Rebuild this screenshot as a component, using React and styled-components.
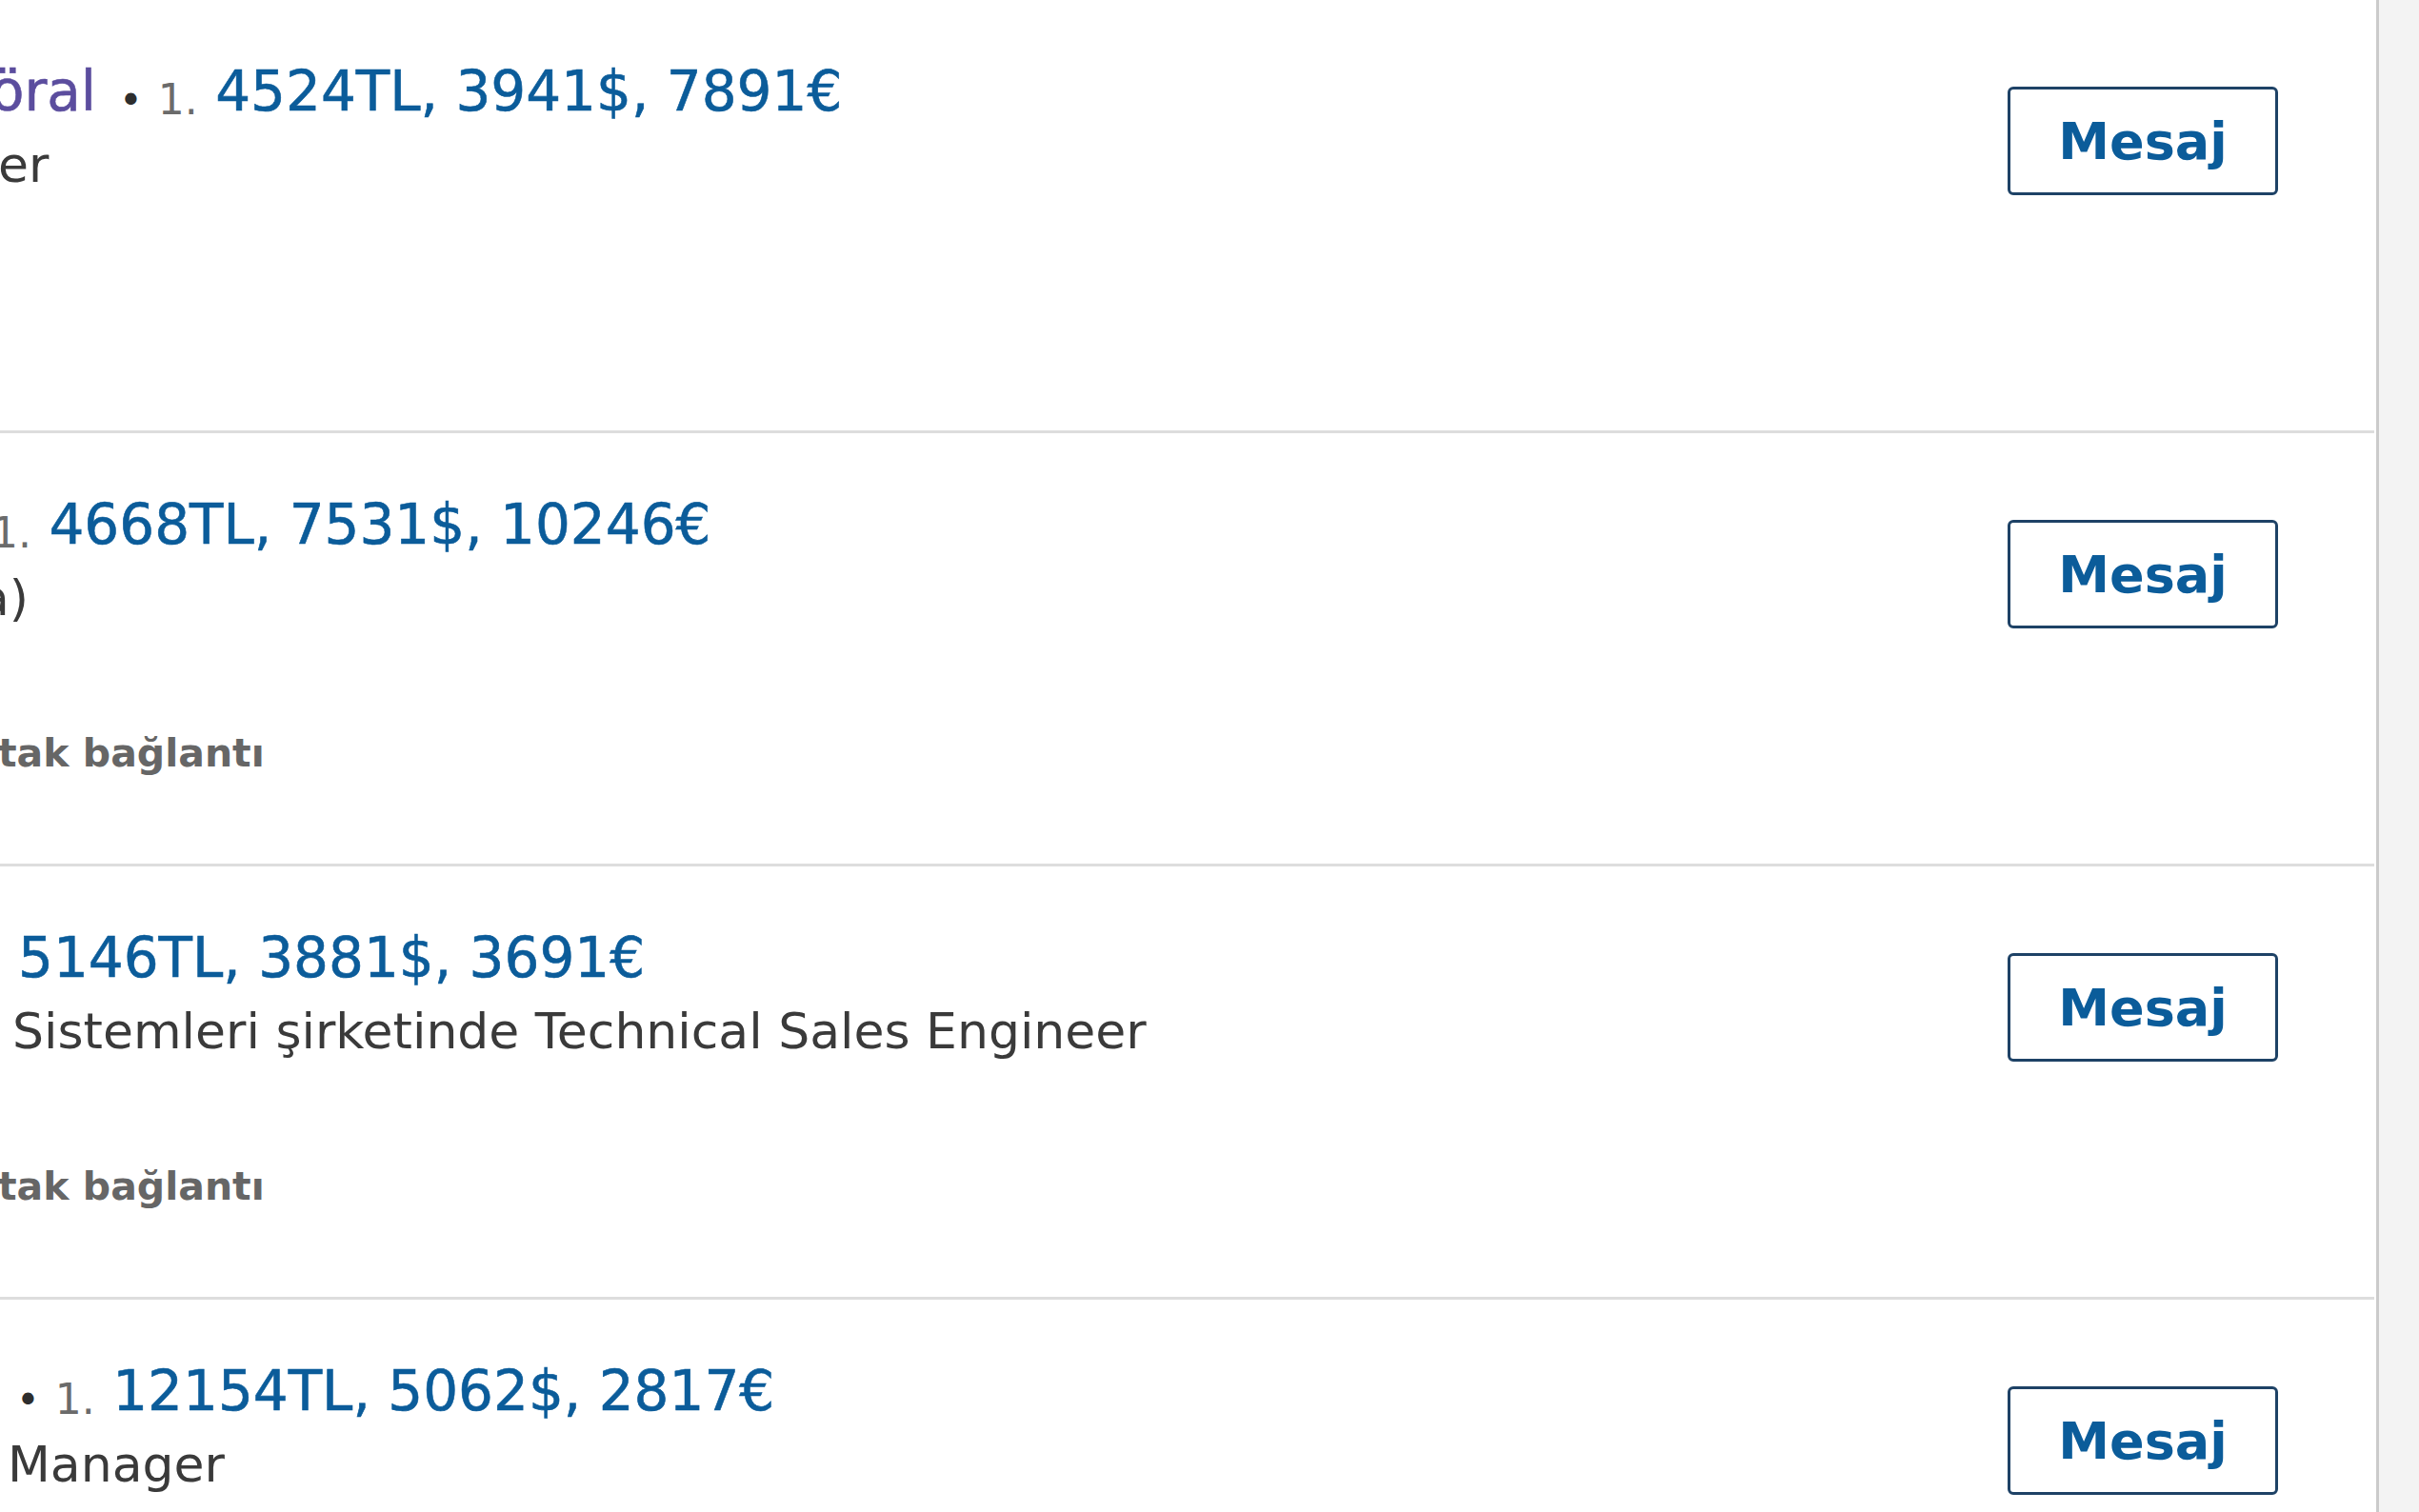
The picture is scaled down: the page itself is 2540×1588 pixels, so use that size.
import React from "react";
import styled, { createGlobalStyle } from "styled-components";

const GlobalStyle = createGlobalStyle`
	html, body {
		margin: 0;
		padding: 0;
		background: #f3f3f3;
	}
	body {
		font-family: "DejaVu Sans", "Noto Sans", sans-serif;
	}
`;

const connections = [
	{ lead: "öral", leadShift: -10, degree: true, price: "4524TL, 3941$, 7891€", title: "er", titleShift: -2 },
	{ lead: null, degreeOnly: "1.", degreeShift: -9, price: "4668TL, 7531$, 10246€", title: "a)", titleShift: -22, mutual: "tak bağlantı", mutualShift: -2 },
	{ lead: null, priceShift: 19, price: "5146TL, 3881$, 3691€", title: "Sistemleri şirketinde Technical Sales Engineer", titleShift: 13, mutual: "tak bağlantı", mutualShift: -2 },
	{ lead: null, degree: true, degreeShift: -7, price: "12154TL, 5062$, 2817€", title: "Manager", titleShift: 8 },
];

function ConnectionRow({ item }) {
	return (
		<Row>
			<Info>
				<NameLine>
					{item.lead && <Name shift={item.leadShift}>{item.lead}</Name>}
					{item.degree && (
						<Degree shift={item.degreeShift}>
							{" "}
							<Bullet>•</Bullet> 1.
						</Degree>
					)}
					{item.degreeOnly && <Degree shift={item.degreeShift}>{item.degreeOnly}</Degree>}
					<Price shift={item.priceShift}>
						{item.lead || item.degree || item.degreeOnly ? " " : ""}
						{item.price}
					</Price>
				</NameLine>
				<Title shift={item.titleShift}>{item.title}</Title>
				{item.mutual && <Mutual shift={item.mutualShift}>{item.mutual}</Mutual>}
			</Info>
			<MessageBtn>Mesaj</MessageBtn>
		</Row>
	);
}

export default function App() {
	return (
		<>
			<GlobalStyle />
			<Page>
				<Panel>
					{connections.map((c, i) => (
						<ConnectionRow key={i} item={c} />
					))}
				</Panel>
			</Page>
		</>
	);
}

const Page = styled.div`
	display: flex;
	width: 2540px;
	height: 1588px;
	overflow: hidden;
`;

const Panel = styled.div`
	width: 2498px;
	height: 100%;
	box-sizing: border-box;
	background: #ffffff;
	border-right: 3px solid #cbcbcb;
	overflow: hidden;
`;

const Row = styled.div`
	display: flex;
	justify-content: space-between;
	align-items: flex-start;
	height: 455px;
	box-sizing: border-box;
	border-bottom: 3px solid #dddddd;
	margin-right: 2px;
`;

const Info = styled.div`
	flex: 1;
	min-width: 0;
	padding-top: 60px;
	overflow: hidden;
`;

const NameLine = styled.div`
	font-size: 58px;
	line-height: 72px;
	white-space: nowrap;
`;

const Name = styled.span`
	color: #5b4d9e;
	-webkit-text-stroke: 0.6px currentColor;
	margin-left: ${(p) => p.shift || 0}px;
`;

const Degree = styled.span`
	display: inline-block;
	font-size: 44px;
	line-height: 1;
	color: #6b6b6b;
	margin-left: ${(p) => p.shift || 0}px;
	vertical-align: -4px;
`;

const Bullet = styled.span`
	color: #2e2e2e;
	font-size: 42px;
	margin: 0 2px 0 24px;
`;

const Price = styled.span`
	color: #0b5c9a;
	-webkit-text-stroke: 0.6px currentColor;
	margin-left: ${(p) => p.shift || 0}px;
`;

const Title = styled.div`
	font-size: 52px;
	line-height: 77px;
	color: #3a3a3a;
	white-space: nowrap;
	margin-top: 3px;
	margin-left: ${(p) => p.shift || 0}px;
`;

const Mutual = styled.div`
	font-size: 41px;
	font-weight: 600;
	line-height: 56px;
	color: #666666;
	white-space: nowrap;
	margin-top: 96px;
	margin-left: ${(p) => p.shift || 0}px;
`;

const MessageBtn = styled.button`
	flex: none;
	width: 284px;
	height: 114px;
	margin-top: 91px;
	margin-right: 101px;
	box-sizing: border-box;
	border: 3px solid #1e4266;
	border-radius: 6px;
	background: #ffffff;
	color: #0b5c9a;
	font-family: "DejaVu Sans", "Noto Sans", sans-serif;
	font-size: 54px;
	font-weight: 600;
	padding: 0;
	cursor: pointer;
`;
